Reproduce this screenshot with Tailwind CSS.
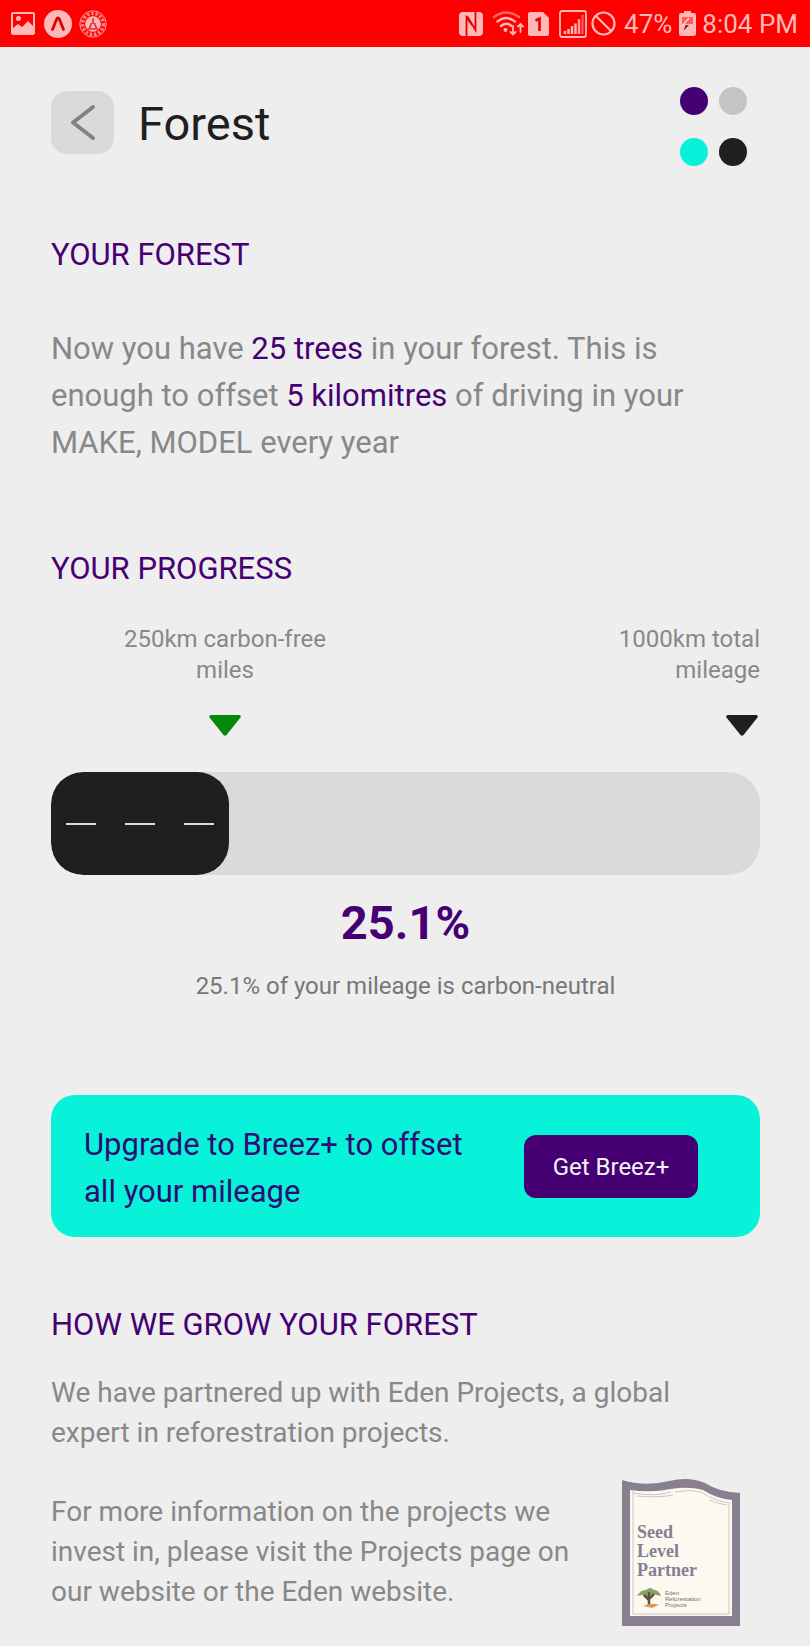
<!DOCTYPE html>
<html lang="en">
<head>
<meta charset="utf-8">
<meta name="viewport" content="width=device-width, initial-scale=1">
<title>Forest</title>
<script src="https://cdn.jsdelivr.net/npm/@tailwindcss/browser@4"></script>
</head>
<body class="min-h-screen bg-[#eeeeee] font-['Roboto',sans-serif] text-[#888888]">

<!-- Status bar -->
<div class="flex h-[47px] items-center bg-[#ff0000] pl-[11px] pr-[12px] text-[26px] leading-8 text-[#ffb8b8]">
  <svg class="h-[23px] w-[24px]" viewBox="0 0 24 23" aria-hidden="true"><path fill="#ffb8b8" fill-rule="evenodd" d="M2 0h20q2 0 2 2v19q0 2-2 2H2q-2 0-2-2V2Q0 0 2 0zM2 2v14l5-4 4 3 6-6 5 5V2z"/><circle cx="7.500" cy="6.500" r="2.500" fill="#ffb8b8"/></svg>
  <svg class="ml-[9px] size-[28px]" viewBox="0 0 28 28" aria-hidden="true"><circle cx="14" cy="14" r="14" fill="#ffb8b8"/><path d="M8.500 19.500 12.500 9.500Q14 6.500 15.500 9.500L19.500 19.500" fill="none" stroke="#e00000" stroke-width="2.800" stroke-linecap="round"/></svg>
  <svg class="ml-[7px] size-[28px]" viewBox="0 0 28 28" aria-hidden="true">
    <circle cx="14" cy="14" r="13.200" fill="none" stroke="#ff9a9a" stroke-width="1"/>
    <circle cx="14" cy="14" r="10.500" fill="none" stroke="#ff8080" stroke-width="3.600" stroke-dasharray="2.600 1.700"/>
    <circle cx="14" cy="14" r="7.800" fill="#ffb8b8"/>
    <path d="M14 8v6M10.500 18.500 12.500 13M17.500 18.500 15.500 13M8.500 19h11" stroke="#e53030" stroke-width="1.600" fill="none"/>
  </svg>
  <div class="ml-auto flex items-center">
    <svg class="h-[26px] w-[24px]" viewBox="0 0 24 26" aria-hidden="true"><rect y="1" width="24" height="24" rx="4" fill="#ffb8b8"/><path d="M7.500 25V6.500L13.500 14.500" fill="none" stroke="#e60000" stroke-width="1.800"/><path d="M16.500 1V19L8 5" fill="none" stroke="#e60000" stroke-width="1.800"/></svg>
    <svg class="ml-[9px] h-[25px] w-[32px]" viewBox="0 0 32 25" aria-hidden="true" fill="none" stroke-linecap="round">
      <path d="M2 6Q14-3 27 6" stroke="#ff6868" stroke-width="2.400"/>
      <path d="M5.500 10.500Q14 3.500 23 10.500M9 15Q14 10.500 19.500 15" stroke="#ffb8b8" stroke-width="2.400"/>
      <circle cx="13.500" cy="19" r="2" fill="#ffb8b8"/>
      <path d="M21 15v8M18.500 21l2.500 2.500 2.500-2.500M28.500 21v-8M26 15.500l2.500-2.500 2.500 2.500" stroke="#ffb8b8" stroke-width="1.800"/>
    </svg>
    <svg class="ml-[4px] h-[24px] w-[21px]" viewBox="0 0 21 24" aria-hidden="true"><path d="M2 0h13l6 6v16q0 2-2 2H2q-2 0-2-2V2Q0 0 2 0z" fill="#ffb8b8"/><path d="M7.500 8.500 11.500 6.500V19" fill="none" stroke="#e60000" stroke-width="2.600"/></svg>
    <svg class="ml-[10px] size-[28px]" viewBox="0 0 28 28" aria-hidden="true"><rect x="1" y="1" width="26" height="26" rx="2" fill="none" stroke="#ffb8b8" stroke-width="1.800"/><path d="M6 24v-3M9.500 24v-5M13 24v-8M16.500 24V13.500" stroke="#ffb8b8" stroke-width="2.400"/><path d="M20 24V9" stroke="#ffa0a0" stroke-width="2.400"/><path d="M23.500 24V5" stroke="#ff5a5a" stroke-width="2.200"/></svg>
    <svg class="ml-[4px] size-[25px]" viewBox="0 0 25 25" aria-hidden="true" fill="none" stroke="#ffb8b8" stroke-width="2.200"><circle cx="12.500" cy="12.500" r="11"/><path d="M4.700 4.700 20.300 20.300"/></svg>
    <span class="ml-[8px]">47%</span>
    <svg class="ml-[7px] h-[25px] w-[17px]" viewBox="0 0 17 25" aria-hidden="true"><path d="M5 0h7v2h3q2 0 2 2v19q0 2-2 2H2q-2 0-2-2V4q0-2 2-2h3z" fill="#ffb8b8"/><path d="M3 6h11v7H3z" fill="#ff5c5c"/><path d="m10 7-6 7 4 1-3 5" fill="none" stroke="#ffd0d0" stroke-width="1.600"/><path d="m4.500 20 2-6H10z" fill="#7a2020"/></svg>
    <span class="ml-[6px]">8:04 PM</span>
  </div>
</div>

<main class="pt-[40px] pr-[50px] pl-[51px]">
  <header class="flex items-start justify-between pr-[13px]">
    <div class="flex items-center gap-[24px] pt-[4px]">
      <button type="button" aria-label="Back" class="flex size-[63px] items-center justify-center rounded-2xl bg-[#dadada]">
        <svg class="size-[63px]" viewBox="0 0 63 63" aria-hidden="true"><path d="M42 16 22 31.500 42 47" fill="none" stroke="#828282" stroke-width="4" stroke-linecap="round" stroke-linejoin="round"/></svg>
      </button>
      <h1 class="pt-[2px] text-[47px] leading-[61px] text-[#1f1f1f]">Forest</h1>
    </div>
    <button type="button" aria-label="Menu" class="grid grid-cols-2 gap-x-[11px] gap-y-[23px]">
      <span class="size-[28px] rounded-full bg-[#460073]"></span>
      <span class="size-[28px] rounded-full bg-[#c4c4c4]"></span>
      <span class="size-[28px] rounded-full bg-[#07f2d8]"></span>
      <span class="size-[28px] rounded-full bg-[#1f1f1f]"></span>
    </button>
  </header>

  <section>
    <h2 class="mt-[65px] text-[31px] leading-[47px] text-[#460073]">YOUR FOREST</h2>
    <p class="mt-[47px] text-[31px] leading-[47px]">Now you have <span class="text-[#460073]">25 trees</span> in your forest. This is enough to offset <span class="text-[#460073]">5 kilomitres</span> of driving in your MAKE, MODEL every year</p>
  </section>

  <section>
    <h2 class="mt-[79px] text-[31px] leading-[47px] text-[#460073]">YOUR PROGRESS</h2>
    <div class="mt-[32px] flex justify-between text-[24px] leading-[31px]">
      <div class="ml-[63px] flex w-[222px] flex-col items-center gap-[29px] text-center">
        <p>250km carbon-free miles</p>
        <svg class="h-[21px] w-[32px]" viewBox="0 0 32 21" aria-hidden="true"><path d="M1.500 0h29q2 1 1 2.500L17.500 20q-1.500 1.500-3 0L.5 2.500Q-.5 1 1.500 0z" fill="#05870a"/></svg>
      </div>
      <div class="flex w-[158px] flex-col items-end gap-[29px] text-right">
        <p>1000km total mileage</p>
        <svg class="mr-[2px] h-[21px] w-[32px]" viewBox="0 0 32 21" aria-hidden="true"><path d="M1.500 0h29q2 1 1 2.500L17.500 20q-1.500 1.500-3 0L.5 2.500Q-.5 1 1.500 0z" fill="#1f1f1f"/></svg>
      </div>
    </div>
    <div role="progressbar" aria-label="Carbon-free mileage" aria-valuemin="0" aria-valuemax="100" aria-valuenow="25.1" class="mt-[36px] h-[103px] overflow-hidden rounded-[32px] bg-[#dadada]">
      <div class="flex h-full items-center justify-between rounded-[32px] bg-[#1f1f1f] px-[15px]" style="width:25.1%">
        <span class="h-[2px] w-[30px] bg-[#dadada]"></span>
        <span class="h-[2px] w-[30px] bg-[#dadada]"></span>
        <span class="h-[2px] w-[30px] bg-[#dadada]"></span>
      </div>
    </div>
    <p class="mt-[20px] text-center text-[47px] leading-[56px] font-bold text-[#460073]">25.1%</p>
    <p class="mt-[20px] text-center text-[24px] leading-[31px] text-[#777777]">25.1% of your mileage is carbon-neutral</p>
  </section>

  <section class="mt-[93px] flex items-center justify-between rounded-3xl bg-[#07f2d8] py-[22px] pr-[62px] pl-[33px]">
    <p class="w-[400px] pt-[4px] text-[31px] leading-[47px] text-[#2d0d74]">Upgrade to Breez+ to offset all your mileage</p>
    <button type="button" class="h-[63px] w-[174px] rounded-xl bg-[#460073] pt-[2px] text-[24px] leading-[31px] text-[#f4f4f4]">Get Breez+</button>
  </section>

  <section>
    <h2 class="mt-[64px] text-[31px] leading-[47px] text-[#460073]">HOW WE GROW YOUR FOREST</h2>
    <p class="mt-[25px] pr-[50px] text-[28px] leading-[40px]">We have partnered up with Eden Projects, a global expert in reforestration projects.</p>
    <div class="flex items-start justify-between pr-[19px]">
      <p class="mt-[39px] w-[530px] text-[28px] leading-[40px]">For more information on the projects we invest in, please visit the Projects page on our website or the Eden website.</p>
      <svg class="mt-[25px] h-[150px] w-[120px]" viewBox="0 0 120 150" role="img" aria-label="Seed Level Partner, Eden Reforestation Projects">
        <path d="M1 2Q24 9 48 3 68-2 84 5 98 14 119 15V148H1z" fill="#887f90"/>
        <path d="M9 12Q30 15 50 11 68 8 82 12 96 21 111 22V138H9z" fill="#fcf9f0"/>
        <path d="M12 13V136H108V25M12 15Q34 19 50 14M54 14Q68 11 80 14 94 23 108 25M16 18Q38 20 52 17M88 22Q98 26 106 27" fill="none" stroke="#c9c4c8" stroke-width="1"/>
        <g fill="#857f93" font-family="'Liberation Serif',serif" font-weight="bold" font-size="18"><text x="16" y="60">Seed</text><text x="16" y="79">Level</text><text x="16" y="98">Partner</text></g>
        <path d="M16 118Q20 111 25 112 29 108 33 112 38 112 40 118L31 116 26 119 21 117z" fill="#83a667"/>
        <path d="M28 114v14M28 122l-5-5M28 121l5-5" stroke="#63513c" stroke-width="2.500" fill="none"/>
        <path d="M22 128Q30 124 38 127L31 130z" fill="#d69a56"/>
        <g fill="#746a6c" font-family="'Liberation Sans',sans-serif" font-size="6"><text x="44" y="117">Eden</text><text x="44" y="123">Reforestation</text><text x="44" y="129">Projects</text></g>
      </svg>
    </div>
  </section>
</main>
</body>
</html>
